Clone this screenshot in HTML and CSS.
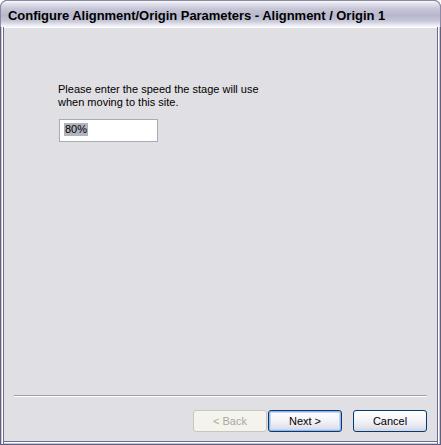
FILE: index.html
```html
<!doctype html>
<html>
<head>
<meta charset="utf-8">
<title>Configure Alignment/Origin Parameters</title>
<link rel="stylesheet" href="styles.css">
</head>
<body>
<div class="window">
	<div class="titlebar">Configure Alignment/Origin Parameters - Alignment / Origin 1</div>
	<div class="frame">
		<div class="page">
			<p class="prompt">Please enter the speed the stage will use<br>when moving to this site.</p>
			<div class="field"><span class="sel">80%</span></div>
		</div>
		<div class="separator"></div>
		<div class="buttons">
			<button class="btn disabled" disabled>&lt; Back</button>
			<button class="btn default">Next &gt;</button>
			<button class="btn cancel">Cancel</button>
		</div>
	</div>
</div>
</body>
</html>
```

FILE: styles.css
```css
html, body { margin:0; padding:0; background:#ffffff; }
body { font-family:"Liberation Sans", "DejaVu Sans", sans-serif; font-size:11px; color:#000; }

.window{
	width:441px;
	height:445px;
	display:flex;
	flex-direction:column;
	background:#5f5f7f;
	border-radius:7px 7px 0 0;
	overflow:hidden;
}
.titlebar{
	height:27px;
	flex:none;
	padding-left:7px;
	line-height:29px;
	font-size:13px;
	letter-spacing:-0.03px;
	font-weight:bold;
	color:#000;
	background:linear-gradient(#fbfbfd 0, #e6e6ee 8%, #c6c6d8 30%, #b8b8cc 55%, #c4c4d6 75%, #e8e8f0 92%, #f8f8fb 100%);
	border:1px solid #8a8aa4;
	border-bottom:none;
	border-radius:7px 7px 0 0;
	box-sizing:border-box;
	white-space:nowrap;
}
.frame{
	flex:1;
	display:flex;
	flex-direction:column;
	background:#e0dfe3;
	border:1px solid #5f5f7f;
	border-top:none;
	box-shadow:inset 1px 0 0 #c8c8d6, inset -1px 0 0 #c8c8d6, inset 2px 0 0 #ffffff, inset -2px 0 0 #ffffff, inset 3px 0 0 #6e6e8c, inset -3px 0 0 #6e6e8c, inset 0 1px 0 #ffffff, inset 0 -1px 0 #c8c8d6, inset 0 -2px 0 #ffffff, inset 0 -3px 0 #6e6e8c;
	padding:0 3px 3px 3px;
}
.page{
	flex:1;
	padding:56px 0 0 54px;
}
.prompt{
	margin:0;
	line-height:13px;
}
.field{
	margin:10px 0 0 1px;
	width:93px;
	height:21px;
	border:1px solid #a5acb5;
	background:#ffffff;
	padding:0 0 0 4px;
	box-sizing:content-box;
}
.sel{
	display:inline-block;
	margin-top:3px;
	height:13px;
	line-height:13px;
	padding:0 1px;
	background:#b2b4bf;
}
.separator{
	margin:0 10px;
	height:1px;
	background:#a0a0a8;
	border-bottom:1px solid #ffffff;
}
.buttons{
	display:flex;
	justify-content:flex-end;
	padding:13px 10px 9px 0;
}
.btn{
	width:74px;
	height:22px;
	padding:0;
	font-family:"Liberation Sans", "DejaVu Sans", sans-serif;
	font-size:11px;
	color:#000;
	border:1px solid #003c74;
	border-radius:3px;
	background:linear-gradient(#ffffff 0, #f6f6fa 40%, #e4e4ee 80%, #d4d4e2 100%);
}
.btn.disabled{
	color:#aca899;
	border-color:#c9c7ba;
	background:#f4f3ee;
}
.btn.default{
	margin-left:1px;
	box-shadow:inset 0 0 0 1px #9fb4e6, inset 0 0 0 2px #c8d4f4;
}
.btn.cancel{
	margin-left:11px;
}
```
